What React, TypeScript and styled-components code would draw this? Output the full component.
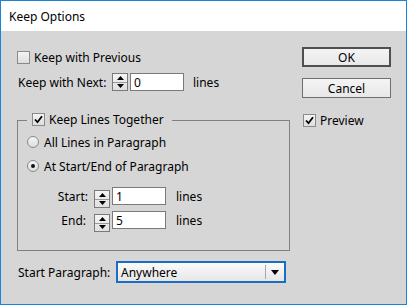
import React from 'react'
import styled, { createGlobalStyle } from 'styled-components'

const GlobalStyle = createGlobalStyle`
  html, body {
    margin: 0;
    padding: 0;
    background: #ffffff;
  }
  body {
    font-family: "Noto Sans", "Open Sans", sans-serif;
    font-size: 12px;
    color: #000;
  }
`

const Window = styled.div`
  width: 407px;
  height: 305px;
  box-sizing: border-box;
  border: 1px solid #1883d7;
  display: flex;
  flex-direction: column;
  background: #d6d6d6;
`

const TitleBar = styled.div`
  height: 30px;
  flex: none;
  background: #ffffff;
  display: flex;
  align-items: center;
  padding-left: 8px;
  font-size: 12px;
  color: #000;
`

const Body = styled.div`
  flex: 1;
  display: flex;
  padding-left: 16px;
`

const LeftColumn = styled.div`
  width: 273px;
  display: flex;
  flex-direction: column;
`

const RightColumn = styled.div`
  width: 89px;
  margin-left: 12px;
  display: flex;
  flex-direction: column;
`

const Row = styled.div<{ $top: number; $h: number; $indent?: number }>`
  display: flex;
  align-items: center;
  height: ${({ $h }) => $h}px;
  margin-top: ${({ $top }) => $top}px;
  margin-left: ${({ $indent }) => $indent ?? 0}px;
  white-space: nowrap;
`

const Label = styled.span<{ $w?: number; $right?: boolean; $gap?: number }>`
  display: inline-block;
  width: ${({ $w }) => ($w ? `${$w}px` : 'auto')};
  text-align: ${({ $right }) => ($right ? 'right' : 'left')};
  margin-left: ${({ $gap }) => $gap ?? 0}px;
  flex: none;
`

const Box = styled.span<{ $checked?: boolean }>`
  width: 13px;
  height: 13px;
  box-sizing: border-box;
  border: 1px solid #8a8a8a;
  background: linear-gradient(#f4f4f4, #dedede);
  display: inline-flex;
  align-items: center;
  justify-content: center;
  flex: none;
  margin-right: 4px;
`

const Radio = styled.span<{ $on?: boolean }>`
  width: 12px;
  height: 12px;
  box-sizing: border-box;
  border-radius: 50%;
  border: 1px solid #8a8a8a;
  background: linear-gradient(#f6f6f6, #dcdcdc);
  display: inline-flex;
  align-items: center;
  justify-content: center;
  flex: none;
  margin-right: 5px;
  &::after {
    content: '';
    display: ${({ $on }) => ($on ? 'block' : 'none')};
    width: 4px;
    height: 4px;
    border-radius: 50%;
    background: #111;
  }
`

function Check({ checked }: { checked?: boolean }) {
  return (
    <Box>
      {checked && (
        <svg width="9" height="9" viewBox="0 0 9 9">
          <path d="M1 4.5 L3.5 7.2 L8 1.2" stroke="#000" strokeWidth="1.8" fill="none" />
        </svg>
      )}
    </Box>
  )
}

const SpinBox = styled.span`
  width: 16px;
  height: 18px;
  box-sizing: border-box;
  border: 1px solid #7a7a7a;
  background: linear-gradient(#f5f5f5, #e0e0e0);
  display: inline-flex;
  flex-direction: column;
  flex: none;
  > span {
    flex: 1;
    display: flex;
    align-items: center;
    justify-content: center;
  }
  > span + span {
    border-top: 1px solid #9a9a9a;
  }
`

function Spinner() {
  return (
    <SpinBox>
      <span>
        <svg width="7" height="4" viewBox="0 0 7 4"><path d="M3.5 0 L7 4 L0 4 Z" fill="#000" /></svg>
      </span>
      <span>
        <svg width="7" height="4" viewBox="0 0 7 4"><path d="M0 0 L7 0 L3.5 4 Z" fill="#000" /></svg>
      </span>
    </SpinBox>
  )
}

const Field = styled.span`
  width: 54px;
  height: 18px;
  box-sizing: border-box;
  margin-left: 2px;
  border: 1px solid #7a7a7a;
  background: #fff;
  display: inline-flex;
  align-items: center;
  padding-left: 3px;
  flex: none;
`

const Units = styled.span<{ $gap: number }>`
  margin-left: ${({ $gap }) => $gap}px;
`

const Group = styled.fieldset`
  margin: 22px 0 0 0;
  padding: 0 0 21px 9px;
  border: 1px solid #808080;
  width: 273px;
  box-sizing: border-box;
`

const Legend = styled.legend`
  padding: 0 8px 0 5px;
  height: 14px;
  display: flex;
  align-items: flex-start;
  white-space: nowrap;
  > span:last-child {
    line-height: 13px;
  }
`

const Button = styled.div<{ $default?: boolean; $top: number }>`
  height: 20px;
  box-sizing: border-box;
  margin-top: ${({ $top }) => $top}px;
  border: ${({ $default }) => ($default ? '2px solid #4f4f4f' : '1px solid #6f6f6f')};
  background: linear-gradient(#f4f4f4, #e8e8e8);
  display: flex;
  align-items: center;
  justify-content: center;
  font-size: 12px;
`

const Select = styled.div`
  width: 170px;
  height: 22px;
  box-sizing: border-box;
  border: 2px solid #1a6dc2;
  background: linear-gradient(#fbfbfb, #e6e6e6);
  display: flex;
  align-items: center;
  flex: none;
`

const SelectText = styled.span`
  flex: 1;
  padding-left: 3px;
`

const SelectArrow = styled.span`
  width: 18px;
  height: 14px;
  border-left: 1px solid #a8a8a8;
  display: flex;
  align-items: center;
  justify-content: center;
`

export default function App() {
  return (
    <>
      <GlobalStyle />
      <Window>
        <TitleBar>Keep Options</TitleBar>
        <Body>
          <LeftColumn>
            <Row $top={20} $h={13}>
              <Check />
              <span>Keep with Previous</span>
            </Row>
            <Row $top={9} $h={18} $indent={1}>
              <Label $w={94}>Keep with Next:</Label>
              <Spinner />
              <Field>0</Field>
              <Units $gap={9}>lines</Units>
            </Row>
            <Group>
              <Legend>
                <Check checked />
                <span>Keep Lines Together</span>
              </Legend>
              <Row $top={9} $h={12}>
                <Radio />
                <span>All Lines in Paragraph</span>
              </Row>
              <Row $top={12} $h={12}>
                <Radio $on />
                <span>At Start/End of Paragraph</span>
              </Row>
              <Row $top={15} $h={18}>
                <Label $w={61} $right>Start:</Label>
                <Label $gap={6}><Spinner /></Label>
                <Field>1</Field>
                <Units $gap={10}>lines</Units>
              </Row>
              <Row $top={6} $h={18}>
                <Label $w={59} $right>End:</Label>
                <Label $gap={8}><Spinner /></Label>
                <Field>5</Field>
                <Units $gap={10}>lines</Units>
              </Row>
            </Group>
            <Row $top={10} $h={22} $indent={1}>
              <Label $w={98}>Start Paragraph:</Label>
              <Select>
                <SelectText>Anywhere</SelectText>
                <SelectArrow>
                  <svg width="8" height="5" viewBox="0 0 8 5"><path d="M0 0 L8 0 L4 5 Z" fill="#000" /></svg>
                </SelectArrow>
              </Select>
            </Row>
          </LeftColumn>
          <RightColumn>
            <Button $default $top={16}>OK</Button>
            <Button $top={11}>Cancel</Button>
            <Row $top={16} $h={13} $indent={1}>
              <Check checked />
              <span>Preview</span>
            </Row>
          </RightColumn>
        </Body>
      </Window>
    </>
  )
}
